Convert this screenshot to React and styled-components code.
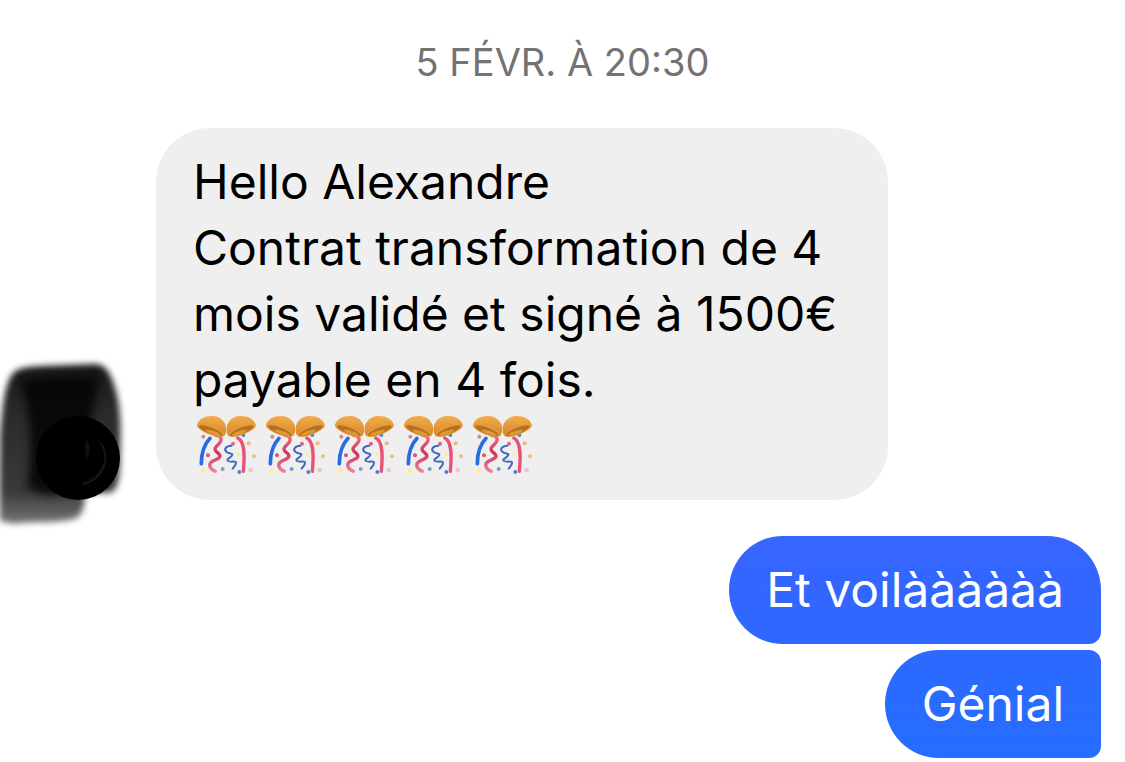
import React from "react";
import styled, { createGlobalStyle } from "styled-components";

const GlobalStyle = createGlobalStyle`
  body {
    margin: 0;
    background-color: #fff;
    font-family: Inter, "Liberation Sans", sans-serif;
  }
`;

const Conversation = styled.main`
  display: flex;
  flex-direction: column;
  padding: 38px 24px 4px 0;
`;

const DateLabel = styled.time`
  align-self: center;
  margin: 0 0 42px 24px;
  color: #737373;
  font-size: 38px;
  line-height: 48px;
`;

const Received = styled.div`
  display: flex;
  align-items: flex-end;
  margin-bottom: 36px;
`;

const Sent = styled.div`
  display: flex;
  flex-direction: column;
  align-items: flex-end;
  gap: 6px;
`;

const Bubble = styled.div`
  padding: 21px 37px;
  border-radius: 54px;
  font-size: 48px;
  line-height: 66px;
`;

const ReceivedBubble = styled(Bubble)`
  box-sizing: border-box;
  width: 732px;
  max-width: 75%;
  background-color: #efefef;
  color: #000;
`;

const SentBubble = styled(Bubble)`
  border-radius: ${({ $last }) => ($last ? "54px 12px 12px 54px" : "54px 54px 12px 54px")};
  background: ${({ $last }) =>
    $last ? "linear-gradient(#2d69ff, #256eff)" : "linear-gradient(#3765ff, #2e68ff)"};
  color: #fff;
`;

const Text = styled.p`
  margin: 0;
`;

const EmojiLine = styled.div`
  display: flex;
`;

const EmojiIcon = styled.svg`
  width: 69px;
  height: 66px;
`;

const AvatarIcon = styled.svg`
  flex: none;
  width: 156px;
  height: 140px;
  overflow: visible;
`;

const dots = [
  [34, 80, 6, "#e17f94"],
  [48, 136, 6, "#d75674"],
  [32, 182, 7, "#f7ed9a"],
  [92, 177, 6, "#7c9bd5"],
  [123, 101, 6, "#df6680"],
  [154, 75, 6, "#4f7fd0"],
  [170, 100, 6, "#edb87c"],
  [186, 139, 6, "#ebbd8c"],
  [140, 132, 6, "#f8eda5"],
  [142, 186, 6, "#4f80d9"],
  [176, 180, 7, "#efc3d1"],
];

const Shell = () => (
  <>
    <path
      d="M15 44C20 26 40 17 62 18C84 19 98 33 102 50C103 61 102 71 97 77C72 79 22 66 15 44Z"
      fill="url(#shell)"
    />
    <ellipse cx="56" cy="61" rx="44" ry="13" transform="rotate(21 56 61)" fill="#e59a3a" />
    <ellipse cx="57" cy="62" rx="38" ry="9" transform="rotate(21 57 62)" fill="#b4701f" />
    <ellipse cx="64" cy="68" rx="24" ry="5" transform="rotate(19 64 68)" fill="#dc9a35" />
  </>
);

const Confetti = () => (
  <EmojiIcon viewBox="3 9 207 198" role="img" aria-label="🎊">
    <defs>
      <linearGradient id="shell" x1="0" y1="0" x2="0" y2="1">
        <stop offset="0" stopColor="#f2ad4d" />
        <stop offset="1" stopColor="#d8862a" />
      </linearGradient>
      <linearGradient id="ribbon" x1="0" y1="0" x2="0" y2="1">
        <stop offset="0" stopColor="#f26a8d" />
        <stop offset="0.5" stopColor="#cf355f" />
        <stop offset="1" stopColor="#f0809d" />
      </linearGradient>
    </defs>
    {dots.map(([cx, cy, r, fill]) => (
      <circle key={`${cx}-${cy}`} cx={cx} cy={cy} r={r} fill={fill} />
    ))}
    <g fill="none" strokeLinecap="round" strokeLinejoin="round">
      <path d="M54 85C36 104 28 133 28 161" stroke="#286ce0" strokeWidth="11" />
      <path
        d="M71 76C91 78 91 92 80 102C67 114 65 120 77 128C93 142 78 146 63 153C46 162 53 177 70 184"
        stroke="url(#ribbon)"
        strokeWidth="10"
      />
      <path
        d="M118 107C102 107 94 118 104 126C113 133 127 128 119 138C114 145 101 148 108 153C117 158 131 151 132 158C133 166 125 170 122 176"
        stroke="#3e69c0"
        strokeWidth="6"
      />
      <path d="M137 84C160 94 158 141 154 184" stroke="#e75277" strokeWidth="10" />
    </g>
    <Shell />
    <g transform="translate(206 0) scale(-1 1)">
      <Shell />
    </g>
  </EmojiIcon>
);

const Avatar = () => (
  <AvatarIcon viewBox="0 360 156 140" aria-hidden="true">
    <defs>
      <linearGradient id="smear" x1="0" y1="0" x2="0" y2="1">
        <stop offset="0" stopColor="#161616" />
        <stop offset="0.3" stopColor="#2a2a2a" />
        <stop offset="0.8" stopColor="#3a3a3a" />
        <stop offset="1" stopColor="#777" />
      </linearGradient>
      <filter id="edge" x="-20%" y="-20%" width="140%" height="140%" colorInterpolationFilters="sRGB">
        <feGaussianBlur stdDeviation="3" />
      </filter>
      <filter id="core" x="-20%" y="-20%" width="140%" height="140%" colorInterpolationFilters="sRGB">
        <feGaussianBlur stdDeviation="4" />
      </filter>
    </defs>
    <path
      d="M0 521C-1 500 0 460 0 436C2 415 3 392 10 378C15 368 24 367 42 366L96 364C108 365 112 378 116 391C121 410 121 429 120 455C120 480 118 493 107 493H85C84 507 83 516 74 519C55 524 25 521 15 524Z"
      fill="url(#smear)"
      filter="url(#edge)"
    />
    <path
      d="M20 382Q31 375 99 376C97 394 94 408 90 423L112 454L88 490L46 495L27 488C30 464 32 441 28 416C27 401 24 391 20 382Z"
      fill="#030303"
      opacity="0.85"
      filter="url(#core)"
    />
    <circle cx="78" cy="458" r="42" fill="#000" />
    <path d="M87 439Q92 449 87 459Q83 449 87 439Z" fill="#151009" />
    <path d="M101 443C111 459 103 479 83 484" fill="none" stroke="#141a21" strokeWidth="2" />
    <path d="M96 438C112 453 105 474 86 480" fill="none" stroke="#0a0d11" strokeWidth="1" />
  </AvatarIcon>
);

const App = () => {
  return (
    <>
      <GlobalStyle />
      <Conversation>
        <DateLabel>5 FÉVR. À 20:30</DateLabel>
        <Received>
          <Avatar />
          <ReceivedBubble>
            <Text>Hello Alexandre</Text>
            <Text>Contrat transformation de 4 mois validé et signé à 1500€ payable en 4 fois.</Text>
            <EmojiLine>
              {[1, 2, 3, 4, 5].map((n) => (
                <Confetti key={n} />
              ))}
            </EmojiLine>
          </ReceivedBubble>
        </Received>
        <Sent>
          <SentBubble>Et voilàààààà</SentBubble>
          <SentBubble $last>Génial</SentBubble>
        </Sent>
      </Conversation>
    </>
  );
};

export default App;
